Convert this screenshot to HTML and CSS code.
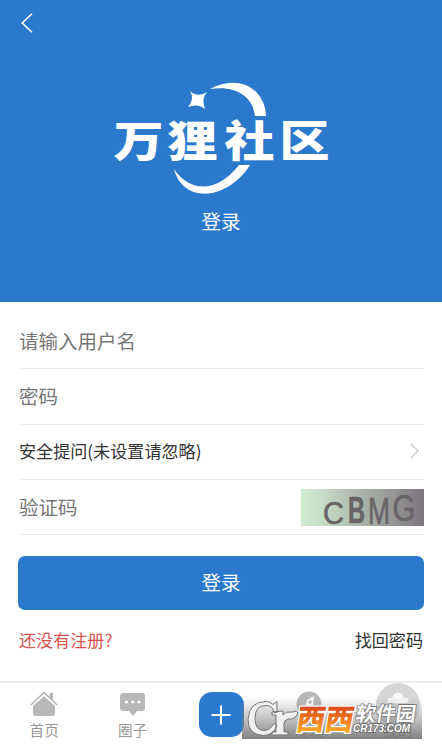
FILE: index.html
```
<!DOCTYPE html>
<html lang="zh-CN">
<head>
    <meta charset="UTF-8">
    <meta name="viewport" content="width=device-width, initial-scale=1.0">
    <title>登录</title>
    <link rel="stylesheet" href="styles.css">
</head>
<body>
    <div class="page">
        <!-- 顶部 -->
        <header class="header">
            <a class="back" href="#" aria-label="返回">
                <svg width="12" height="20" viewBox="0 0 12 20"><path d="M11 .7 1.2 10 11 19.3" fill="none" stroke="#fff" stroke-width="1.5"/></svg>
            </a>
            <svg class="logo" width="220" height="120" viewBox="110 76 220 120">
                <path d="M209 89C236 74 264 87 265 116H254C252 96 234 85 209 89Z" fill="#fff"/>
                <path d="M173 169C182 204 226 201 249 165H238C217 192 190 194 173 169Z" fill="#fff"/>
                <path d="M189 91Q197 98 206 92Q200 99 204 109Q197 103 187 107Q194 99 189 91Z" fill="#fff"/>
                <text class="logo-text" transform="translate(0 156.500) scale(1 .86)" x="112.500 166.500 223.500 278.500" y="0">万狸社区</text>
            </svg>
            <h1 class="header-title">登录</h1>
        </header>

        <!-- 登录表单 -->
        <form class="form">
            <div class="row"><input class="input" type="text" placeholder="请输入用户名"></div>
            <div class="row"><input class="input" type="password" placeholder="密码"></div>
            <div class="row question">
                <span>安全提问(未设置请忽略)</span>
                <svg width="10" height="16" viewBox="0 0 10 16"><path d="M1 1 8.200 8 1 15" fill="none" stroke="#c8c8c8" stroke-width="1.200"/></svg>
            </div>
            <div class="row">
                <input class="input" type="text" placeholder="验证码">
                <svg class="captcha" width="123" height="37" viewBox="0 0 123 37">
                    <defs>
                        <linearGradient id="captchaBg">
                            <stop offset="0" stop-color="#d0ebd0"/>
                            <stop offset=".15" stop-color="#c8dfc8"/>
                            <stop offset="1" stop-color="#7e767e"/>
                        </linearGradient>
                    </defs>
                    <rect width="123" height="37" fill="url(#captchaBg)"/>
                    <g class="captcha-text">
                        <text x="22" y="35" font-size="32" textLength="21" lengthAdjust="spacingAndGlyphs">C</text>
                        <text class="captcha-bold" x="47" y="34" font-size="37" textLength="17" lengthAdjust="spacingAndGlyphs">B</text>
                        <text x="67" y="35" font-size="36" textLength="22" lengthAdjust="spacingAndGlyphs">M</text>
                        <text x="91.500" y="32" font-size="36" textLength="23" lengthAdjust="spacingAndGlyphs">G</text>
                    </g>
                </svg>
            </div>
            <button class="submit" type="button">登录</button>
            <div class="links">
                <a class="register" href="#">还没有注册?</a>
                <a href="#">找回密码</a>
            </div>
        </form>

        <!-- 底部导航 -->
        <nav class="tabbar">
            <a class="tab" href="#">
                <svg width="28" height="26" viewBox="0 0 28 26">
                    <path d="M1 14 14 1.500 27 14" fill="none" stroke="#b8b8b8" stroke-width="1.700"/>
                    <path d="M19.500 2h3.500v7.500l-3.500-3.400ZM14 5.200 25 15v7q0 3-3 3H6q-3 0-3-3v-7Z" fill="#b8b8b8"/>
                </svg>
                <span>首页</span>
            </a>
            <a class="tab" href="#">
                <svg width="28" height="26" viewBox="0 0 28 26">
                    <path d="M5 2h18q3 0 3 3v12q0 3-3 3h-5l-4 5-4-5H4q-3 0-3-3V5q0-3 3-3Z" fill="#b8b8b8"/>
                    <g fill="#fff"><circle cx="7.500" cy="11" r="1.600"/><circle cx="13.700" cy="11" r="1.600"/><circle cx="20" cy="11" r="1.600"/></g>
                </svg>
                <span>圈子</span>
            </a>
            <a class="tab tab-add" href="#" aria-label="发布">
                <span class="add"><svg width="20" height="20" viewBox="0 0 20 20"><path d="M10 .5v19M.5 10h19" stroke="#fff" stroke-width="2"/></svg></span>
            </a>
            <a class="tab" href="#">
                <svg width="28" height="26" viewBox="0 0 28 26">
                    <circle cx="14" cy="13" r="12.500" fill="#b8b8b8"/>
                    <path d="m9 19 3-10 7-4-1 10Z" fill="#fff"/>
                    <circle cx="15" cy="11" r="1.700" fill="#b8b8b8"/>
                </svg>
                <span>发现</span>
            </a>
            <a class="tab tab-me" href="#">
                <svg width="44" height="44" viewBox="0 0 44 44">
                    <circle cx="22" cy="22" r="22" fill="#d6d6d6"/>
                    <circle cx="22" cy="15" r="5.500" fill="#f8f8f8"/>
                    <rect x="11.500" y="15" width="21" height="5" rx="2" fill="#f8f8f8"/>
                    <rect x="11.500" y="25" width="21" height="8" rx="2" fill="#f8f8f8"/>
                </svg>
                <span>我的</span>
            </a>

            <!-- 站点水印 -->
            <svg class="watermark" width="180" height="49" viewBox="242 690 180 49">
                <defs>
                    <linearGradient id="markBg" x2="0" y2="1">
                        <stop offset="0" stop-color="#888" stop-opacity="0"/>
                        <stop offset="1" stop-color="#777" stop-opacity=".92"/>
                    </linearGradient>
                    <linearGradient id="markOrange" x2="0" y2="1">
                        <stop offset=".3" stop-color="#e0501c"/>
                        <stop offset=".85" stop-color="#ffa826"/>
                    </linearGradient>
                </defs>
                <rect x="242" y="697" width="180" height="42" fill="url(#markBg)"/>
                <path d="M277 701.500v11h-3q-1-7-8-7-11 0-11 13 0 12 9 12 6 0 10-7l3 2q-4 10-14 10-15-1-15-16 1-18 18-18 4 0 7 3ZM272 712l11-1v4q3-4 7-3h3q4-2 5 1-3 7-10 6-4 1-4 5v8h4v3h-16v-3h4v-17h-4Z" fill="#f0f0f0" stroke="#777" stroke-width="1"/>
                <g transform="translate(295 730) skewX(-10)">
                    <text class="mark-name" y="0" textLength="57" lengthAdjust="spacingAndGlyphs">西西</text>
                </g>
                <g transform="translate(355 720.500) skewX(-8)">
                    <text class="mark-soft" y="0" textLength="60" lengthAdjust="spacingAndGlyphs">软件园</text>
                </g>
                <text class="mark-url" x="353" y="732" textLength="57" lengthAdjust="spacingAndGlyphs">CR173.COM</text>
            </svg>
        </nav>
    </div>
</body>
</html>
```
FILE: styles.css
```
:root {
    --primary-color: #2b79cd;
    --text-color: #333;
    --line-color: #ebebeb;
}

* {
    margin: 0;
    padding: 0;
    box-sizing: border-box;
}

body {
    font-family: "Noto Sans CJK SC", sans-serif;
    background-color: #fff;
    color: var(--text-color);
}

a {
    color: inherit;
    text-decoration: none;
}

svg {
    display: block;
    flex-shrink: 0;
}

.page {
    height: 749px;
    display: flex;
    flex-direction: column;
    overflow: hidden;
}

.header {
    height: 302px;
    background-color: var(--primary-color);
    color: #fff;
    display: flex;
    flex-direction: column;
    align-items: center;
}

.back {
    align-self: flex-start;
    padding: 13px 21px 0;
    height: 76px;
}

.logo-text {
    font-size: 50px;
    font-weight: 900;
    fill: #fff;
}

.header-title {
    margin-top: 11px;
    font-size: 19.500px;
    font-weight: 400;
    line-height: 28px;
}

.form {
    padding: 12px 18px 0;
}

.row {
    height: 55.300px;
    padding-bottom: 2px;
    display: flex;
    align-items: center;
    justify-content: space-between;
    border-bottom: 1px solid var(--line-color);
}

.input {
    flex: 1;
    min-width: 0;
    padding-left: 1px;
    border: none;
    outline: none;
    background: none;
    font-family: inherit;
    font-size: 19.500px;
}

.input::placeholder {
    color: #777;
}

.question {
    font-size: 17.100px;
    padding-left: 1px;
    padding-right: 4px;
}

.captcha {
    overflow: visible;
    margin-top: 2px;
}

.captcha-text {
    font-family: "Liberation Sans", sans-serif;
    fill: #686468;
    stroke: #686468;
    stroke-width: .6;
}

.captcha-bold {
    font-weight: 700;
}

.submit {
    display: block;
    width: 100%;
    height: 54px;
    margin-top: 21px;
    padding-bottom: 3px;
    border: none;
    border-radius: 7px;
    background-color: var(--primary-color);
    color: #fff;
    font-family: inherit;
    font-size: 19.500px;
}

.links {
    display: flex;
    justify-content: space-between;
    margin-top: 17px;
    padding: 0 1px;
    font-size: 17.100px;
    line-height: 25px;
}

.register {
    color: #d9534f;
}

.tabbar {
    position: relative;
    height: 68px;
    margin-top: auto;
    border-top: 2px solid #eee;
    display: flex;
}

.tab {
    flex: 1;
    display: flex;
    flex-direction: column;
    align-items: center;
    padding-top: 8px;
    font-size: 14.600px;
    line-height: 22px;
    color: #999;
}

.tab span {
    margin-top: 2px;
}

.tab-me {
    padding-top: 0;
}

.tab-me span {
    margin-top: -8px;
    color: #777;
}

.tab .add {
    width: 45px;
    height: 45px;
    margin-top: 1px;
    border-radius: 13px;
    background-color: var(--primary-color);
    display: flex;
    align-items: center;
    justify-content: center;
}

.watermark {
    position: absolute;
    left: 242px;
    bottom: 10px;
}

.mark-name {
    font-size: 29px;
    font-weight: 900;
    fill: url(#markOrange);
    stroke: #fff;
    stroke-width: 2.500px;
    paint-order: stroke;
}

.mark-soft {
    font-size: 20px;
    font-weight: 700;
    fill: #fff;
    stroke: #777;
    stroke-width: 1.500px;
    paint-order: stroke;
}

.mark-url {
    font-family: "Liberation Sans", sans-serif;
    font-size: 11px;
    font-style: italic;
    font-weight: 700;
    fill: #fff;
    stroke: #666;
    stroke-width: 1.500px;
    paint-order: stroke;
}
```
